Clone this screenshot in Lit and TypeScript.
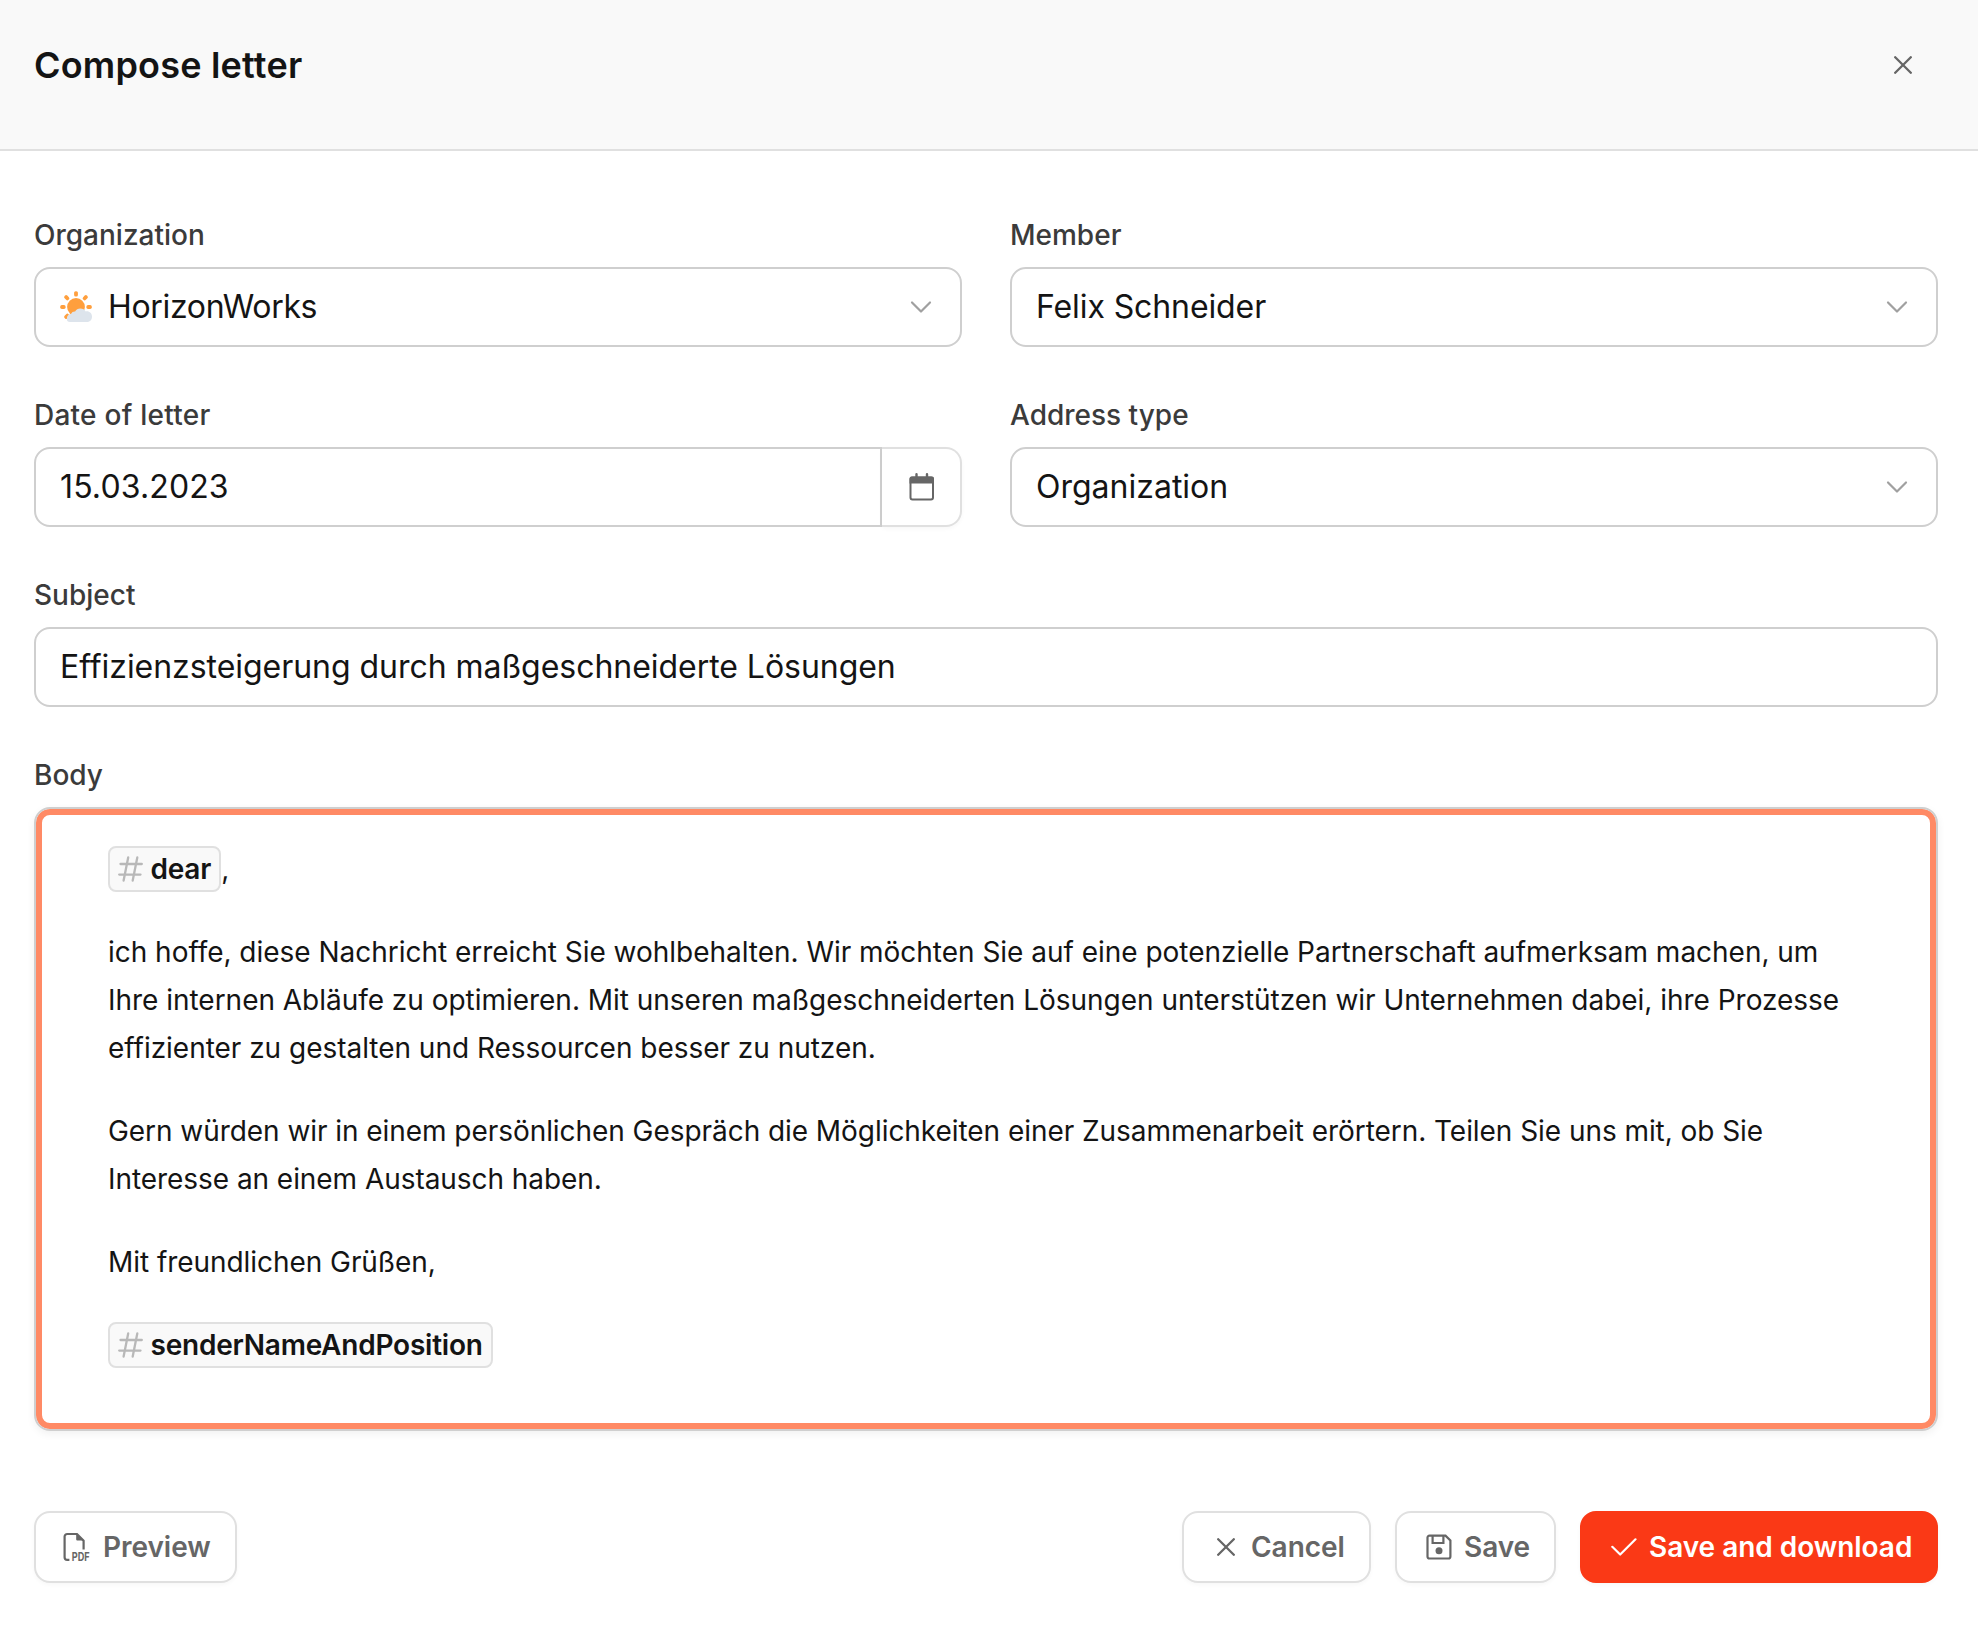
import { LitElement, html, css, svg } from "lit";
import { customElement, property } from "lit/decorators.js";

const chevron = html`<svg class="chev" width="22" height="14" viewBox="0 0 22 14" fill="none" stroke="#a0a0a0" stroke-width="2.200" stroke-linecap="round" stroke-linejoin="round"><path d="M2 2.500l9 9 9-9" /></svg>`;

const cross = (size: number) => html`<svg width=${size} height=${size} viewBox="0 0 18 18" fill="none" stroke="currentColor" stroke-width="2.300" stroke-linecap="round"><path d="M1.200 1.200l15.600 15.600M16.800 1.200L1.200 16.800" /></svg>`;

const hash = html`<svg class="hash" width="25" height="26" viewBox="0 0 25 26" fill="none" stroke="#b8b8b8" stroke-width="2.300" stroke-linecap="round"><path d="M10.200 1.500L5.600 24.500M19.300 1.500L14.700 24.500M2.500 8H23.800M1.200 18.600H22.500" /></svg>`;

const rays = [0, 45, 90, 225, 270, 315].map(
  (a) => svg`<rect x="14.100" y="0.200" width="3.800" height="5.400" rx="1.600" transform="rotate(${a} 16 16)" />`
);
const sun = html`<svg class="sun" width="32" height="32" viewBox="0 0 32 32"><g fill="#ff9f3d">${rays}<circle cx="16" cy="16" r="8.900" /></g><path d="M10.200 31a3.300 3.300 0 0 1-3.400-3.300c0-3 2-4.700 4.300-4.900a4 4 0 0 1 4-2.400c1-1.700 3-2.900 5.100-2.900 2.600 0 4.600 1.200 5.500 2.900 3.300-.8 6.300 1.800 6.300 5.300s-2.500 5.300-5.400 5.300z" fill="#dde4ec" /></svg>`;

const calendar = html`<svg width="26" height="28" viewBox="0 0 26 28" fill="none"><rect x="1.500" y="4.500" width="22.500" height="22" rx="2" stroke="#666" stroke-width="2" /><path d="M.5 5.500a2 2 0 0 1 2-2h20.500a2 2 0 0 1 2 2v5H.5z" fill="#666" /><path d="M7.500 1.200v4M18 1.200v4" stroke="#666" stroke-width="2.400" stroke-linecap="round" /></svg>`;

const pdf = html`<svg class="pdf" width="36" height="46" viewBox="0 -8 36 46" fill="none" stroke="currentColor" stroke-width="2.200"><path d="M6.400 27.900H4.200A2.600 2.600 0 0 1 1.600 25.300V4.600A2.600 2.600 0 0 1 4.200 2H14l6.600 6.600V17.500" /><path d="M13.200 1.500v5.700c0 .9.5 1.400 1.400 1.400h6.500z" fill="currentColor" stroke="none" /><text transform="translate(8.800 28.900) scale(0.760 1)" fill="currentColor" stroke="none" font-size="12" font-weight="700" letter-spacing="0">PDF</text></svg>`;

const floppy = html`<svg width="26" height="26" viewBox="0 0 26 26" fill="none" stroke="currentColor" stroke-width="2.200"><path d="M3.500 1.600h16l4.900 4.900V22.500a2 2 0 0 1-2 2H3.500a2 2 0 0 1-2-2V3.600a2 2 0 0 1 2-2z" /><path d="M6.600 2v7h10.800V2" /><circle cx="13" cy="16.800" r="3.500" fill="currentColor" stroke="none" /></svg>`;

const check = html`<svg width="26" height="18" viewBox="0 0 26 18" fill="none" stroke="currentColor" stroke-width="2.200" stroke-linecap="round" stroke-linejoin="round"><path d="M1.300 8.800l7.900 7.700L24.500 1.300" /></svg>`;

@customElement("form-field")
class FormField extends LitElement {
  @property() label = "";
  static styles = css`
    :host { display: block; }
    .label { height: 49px; line-height: 34px; font-size: 28px; font-weight: 500; color: #3b3b3b; }
    :host(.loose) .label { letter-spacing: 0.25px; }
  `;
  render() {
    return html`<div class="label">${this.label}</div><slot></slot>`;
  }
}

@customElement("var-chip")
class VarChip extends LitElement {
  static styles = css`
    :host { display: inline-flex; align-items: center; box-sizing: border-box; height: 46px; padding: 0 8px 0 8px; border: 2px solid #e0e0e0; border-radius: 8px; background: #f9f9f9; font-weight: 600; line-height: 42px; letter-spacing: -0.22px; }
    .hash { margin-right: 7.500px; }
  `;
  render() {
    return html`${hash}<slot></slot>`;
  }
}

@customElement("app-root")
export class AppRoot extends LitElement {
  static styles = css`
    :host { display: block; height: 1630px; overflow: hidden; background: #fff; color: #141414; font-family: Inter, "Liberation Sans", sans-serif; }
    svg { flex: none; display: block; }
    .header { box-sizing: border-box; height: 151px; padding: 40px 66px 0 34px; border-bottom: 2px solid #e0e0e0; background: #f9f9f9; display: flex; justify-content: space-between; align-items: flex-start; }
    .title { margin: 0; font-size: 36px; font-weight: 600; line-height: 50px; letter-spacing: 0.2px; }
    .close { display: flex; padding-top: 16px; color: #666; }
    .form { padding: 67px 40px 0 34px; }
    .grid { display: grid; grid-template-columns: 1fr 1fr; gap: 51px 48px; }
    .wide { grid-column: 1 / -1; }
    .box { box-sizing: border-box; height: 80px; border: 2px solid #cfcfcf; border-radius: 16px; padding: 0 28px 0 24px; display: flex; align-items: center; font-size: 32px; line-height: 44px; }
    .value { flex: 1; }
    .org { letter-spacing: -0.32px; }
    .person { letter-spacing: -0.1px; }
    .date { letter-spacing: 0.13px; }
    .subject { letter-spacing: -0.04px; }
    .sun { margin-right: 16px; }
    .group { display: flex; }
    .group .box { flex: 1; border-radius: 16px 0 0 16px; }
    .cal { box-sizing: border-box; width: 80px; padding-left: 2px; border: 2px solid #e0e0e0; border-left: 0; border-radius: 0 16px 16px 0; display: flex; align-items: center; justify-content: center; box-shadow: 0 2px 4px rgba(0, 0, 0, 0.03); }
    .editor { box-sizing: border-box; height: 624px; border: 2px solid #cfcfcf; border-radius: 16px; padding: 36px 72px; box-shadow: inset 0 0 0 6px #ff8a65, 0 3px 8px rgba(0, 0, 0, 0.06); font-size: 28px; line-height: 48px; letter-spacing: -0.025px; }
    .editor p { margin: 0 0 35px; }
    .editor .tight { letter-spacing: -0.055px; }
    .editor .vars { height: 48px; display: flex; align-items: center; }
    .footer { margin-top: 80px; display: flex; gap: 24px; }
    .grow { flex: 1; }
    .btn { box-sizing: border-box; height: 72px; border: 2px solid #e0e0e0; border-radius: 16px; background: #fff; color: #666; display: flex; align-items: center; font-size: 28px; font-weight: 600; line-height: 40px; letter-spacing: -0.04px; white-space: nowrap; box-shadow: 0 2px 4px rgba(0, 0, 0, 0.03); }
    .preview { width: 203px; padding-left: 27px; gap: 4px; }
    .cancel { width: 189px; padding-left: 32.500px; gap: 16.500px; }
    .save { width: 161px; padding-left: 29px; gap: 12px; }
    .primary { width: 358px; padding-left: 29px; gap: 12px; background: #fa3916; border-color: #fa3916; color: #fff; }
  `;

  render() {
    return html`
      <header class="header">
        <h1 class="title">Compose letter</h1>
        <div class="close">${cross(18)}</div>
      </header>
      <main class="form">
        <div class="grid">
          <form-field label="Organization"><div class="box">${sun}<span class="value org">HorizonWorks</span>${chevron}</div></form-field>
          <form-field label="Member"><div class="box"><span class="value person">Felix Schneider</span>${chevron}</div></form-field>
          <form-field class="loose" label="Date of letter"><div class="group"><div class="box"><span class="value date">15.03.2023</span></div><div class="cal">${calendar}</div></div></form-field>
          <form-field label="Address type"><div class="box"><span class="value">Organization</span>${chevron}</div></form-field>
          <form-field class="wide" label="Subject"><div class="box"><span class="value subject">Effizienzsteigerung durch maßgeschneiderte Lösungen</span></div></form-field>
          <form-field class="wide" label="Body">
            <div class="editor">
              <p class="vars"><var-chip>dear</var-chip>,</p>
              <p>ich hoffe, diese Nachricht erreicht Sie wohlbehalten. Wir möchten Sie auf eine potenzielle Partnerschaft aufmerksam machen, um Ihre internen Abläufe zu optimieren. Mit unseren maßgeschneiderten Lösungen unterstützen wir Unternehmen dabei, ihre Prozesse effizienter zu gestalten und Ressourcen besser zu nutzen.</p>
              <p class="tight">Gern würden wir in einem persönlichen Gespräch die Möglichkeiten einer Zusammenarbeit erörtern. Teilen Sie uns mit, ob Sie Interesse an einem Austausch haben.</p>
              <p class="tight">Mit freundlichen Grüßen,</p>
              <p class="vars"><var-chip>senderNameAndPosition</var-chip></p>
            </div>
          </form-field>
        </div>
        <footer class="footer">
          <div class="btn preview">${pdf}<span>Preview</span></div>
          <div class="grow"></div>
          <div class="btn cancel">${cross(18)}<span>Cancel</span></div>
          <div class="btn save">${floppy}<span>Save</span></div>
          <div class="btn primary">${check}<span>Save and download</span></div>
        </footer>
      </main>
    `;
  }
}
